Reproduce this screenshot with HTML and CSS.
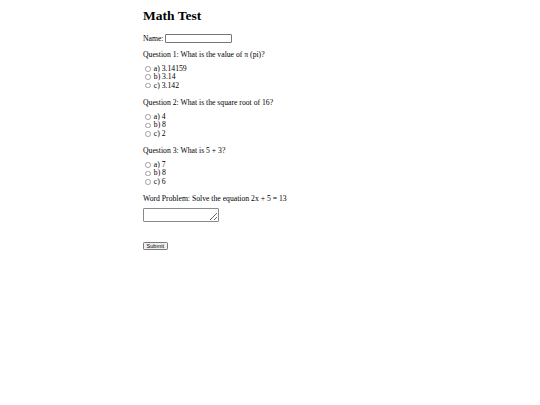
FILE: index.html
```html
<!DOCTYPE html>
<html>
<head>
<meta charset="utf-8">
<title>Math Test</title>
<link rel="stylesheet" href="styles.css">
</head>
<body>
<div class="page">
<h1 class="title">Math Test</h1>
<form class="test">
<div class="name-row"><label for="name">Name:</label><input class="text-input" type="text" id="name" name="name"></div>
<p class="question">Question 1: What is the value of π (pi)?</p>
<div class="options">
<label class="option"><input class="radio" type="radio" name="q1" value="a"><span>a) 3.14159</span></label>
<label class="option"><input class="radio" type="radio" name="q1" value="b"><span>b) 3.14</span></label>
<label class="option"><input class="radio" type="radio" name="q1" value="c"><span>c) 3.142</span></label>
</div>
<p class="question">Question 2: What is the square root of 16?</p>
<div class="options">
<label class="option"><input class="radio" type="radio" name="q2" value="a"><span>a) 4</span></label>
<label class="option"><input class="radio" type="radio" name="q2" value="b"><span>b) 8</span></label>
<label class="option"><input class="radio" type="radio" name="q2" value="c"><span>c) 2</span></label>
</div>
<p class="question">Question 3: What is 5 + 3?</p>
<div class="options">
<label class="option"><input class="radio" type="radio" name="q3" value="a"><span>a) 7</span></label>
<label class="option"><input class="radio" type="radio" name="q3" value="b"><span>b) 8</span></label>
<label class="option"><input class="radio" type="radio" name="q3" value="c"><span>c) 6</span></label>
</div>
<p class="question question-last">Word Problem: Solve the equation 2x + 5 = 13</p>
<textarea class="answer" name="wp"></textarea>
<button class="submit" type="submit">Submit</button>
</form>
</div>
</body>
</html>
```
FILE: styles.css
```css
html, body {
  margin: 0;
  padding: 0;
  background: #fff;
}
.page {
  width: 254px;
  margin: 0 auto;
  font-family: "Liberation Serif", "Times New Roman", serif;
  font-size: 7.7px;
  color: #000;
}
.title {
  font-size: 13.5px;
  line-height: 16px;
  font-weight: bold;
  margin: 8px 0 0;
}
.test {
  display: flex;
  flex-direction: column;
  align-items: flex-start;
}
.name-row {
  display: flex;
  align-items: center;
  gap: 1px;
  height: 9px;
  margin-top: 10px;
  line-height: 9px;
}
.text-input {
  box-sizing: border-box;
  width: 67px;
  height: 8.5px;
  margin: 0;
  padding: 0;
  font-size: 6px;
  line-height: 6px;
  border: 1px solid #767676;
  border-radius: 1px;
  background: #fff;
  flex: none;
}
.question {
  margin: 7.9px 0 6.1px;
  line-height: 9px;
}
.name-row + .question {
  margin-top: 6.5px;
}
.question-last {
  margin-bottom: 5px;
}
.options {
  display: flex;
  flex-direction: column;
}
.option {
  display: flex;
  align-items: center;
  height: 8.4px;
  line-height: 8px;
}
.radio {
  appearance: none;
  -webkit-appearance: none;
  box-sizing: border-box;
  width: 5.6px;
  height: 5.6px;
  margin: 0 2.8px 0 2.4px;
  border: 0.6px solid #a0a0a0;
  border-radius: 50%;
  background: #fff;
}
.answer {
  box-sizing: border-box;
  width: 76px;
  height: 14.5px;
  margin: 0;
  padding: 0;
  border: 0.75px solid #8a8a8a;
  border-radius: 1px;
  background: #fff;
  resize: both;
}
.submit {
  box-sizing: border-box;
  margin-top: 20px;
  width: 24.5px;
  height: 8px;
  padding: 0;
  font-family: "Liberation Sans", Arial, sans-serif;
  font-size: 5.6px;
  line-height: 6px;
  color: #000;
  background: #efefef;
  border: 0.6px solid #7a7a7a;
  border-radius: 1.2px;
}
```
